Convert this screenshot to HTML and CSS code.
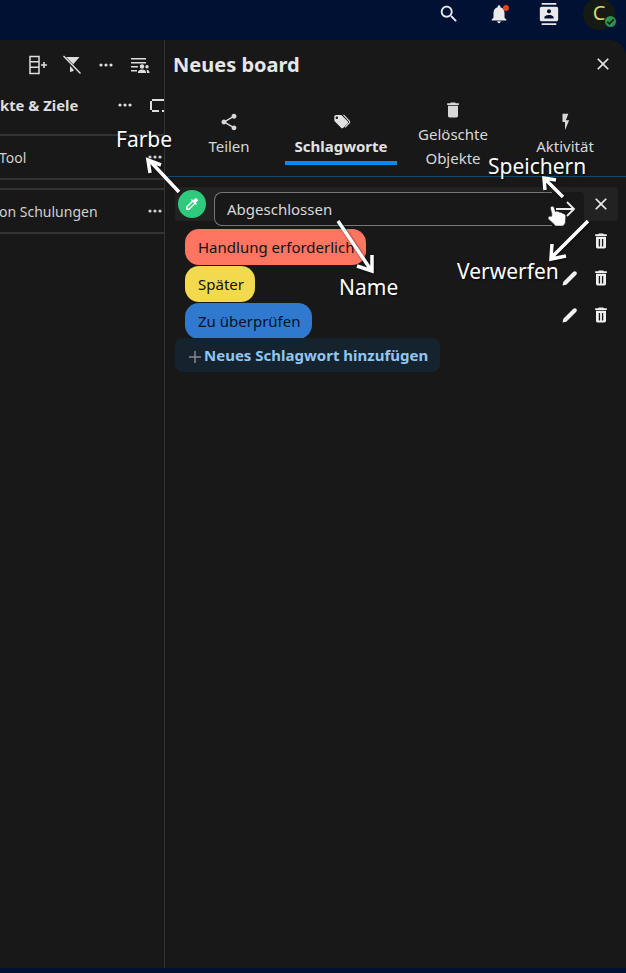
FILE: index.html
```html
<!DOCTYPE html>
<html lang="de">
<head>
<meta charset="utf-8">
<title>Neues board</title>
<link rel="stylesheet" href="styles.css">
</head>
<body>
<svg class="defs" width="0" height="0" aria-hidden="true">
  <symbol id="i-dots" viewBox="0 0 16 16"><circle cx="3" cy="8" r="1.6"/><circle cx="8" cy="8" r="1.6"/><circle cx="13" cy="8" r="1.6"/></symbol>
  <symbol id="i-trash" viewBox="0 0 24 24"><path fill-rule="evenodd" d="M6 19c0 1.100.9 2 2 2h8c1.100 0 2-.9 2-2V7H6v12zM9.300 9.500h1.600v9H9.300zM13.100 9.500h1.600v9h-1.600zM19 4h-3.500l-1-1h-5l-1 1H5v2h14V4z"/></symbol>
  <symbol id="i-edit" viewBox="0 0 24 24"><path d="M3 21l1-4.500L16 4.500c1-1 2.500-1 3.500 0s1 2.500 0 3.500L7.500 20z"/></symbol>
  <symbol id="i-close" viewBox="0 0 24 24"><path d="M19 6.410L17.590 5 12 10.590 6.410 5 5 6.410 10.590 12 5 17.590 6.410 19 12 13.410 17.590 19 19 17.590 13.410 12z"/></symbol>
</svg>

<header class="topbar">
  <svg class="ico ico-22" viewBox="0 0 24 24"><path d="M15.500 14h-.79l-.28-.27C15.410 12.590 16 11.110 16 9.500 16 5.910 13.090 3 9.500 3S3 5.910 3 9.500 5.910 16 9.500 16c1.610 0 3.090-.59 4.230-1.570l.27.28v.79l5 4.990L20.490 19l-4.990-5zm-6 0C7.010 14 5 11.990 5 9.500S7.010 5 9.500 5 14 7.010 14 9.500 11.990 14 9.500 14z"/></svg>
  <span class="bell">
    <svg class="ico ico-22" viewBox="0 0 24 24"><path d="M12 22c1.100 0 2-.9 2-2h-4c0 1.100.9 2 2 2zm6-6v-5c0-3.070-1.630-5.640-4.500-6.320V4c0-.83-.67-1.500-1.500-1.500s-1.500.67-1.500 1.500v.68C7.640 5.360 6 7.920 6 11v5l-2 2v1h16v-1l-2-2z"/></svg>
    <i class="bell-dot"></i>
  </span>
  <svg class="ico ico-22" viewBox="0 0 24 24"><path d="M20 0H4v2h16V0zM4 24h16v-2H4v2zM20 4H4c-1.100 0-2 .9-2 2v12c0 1.100.9 2 2 2h16c1.100 0 2-.9 2-2V6c0-1.100-.9-2-2-2zm-8 2.750c1.240 0 2.250 1.010 2.250 2.250s-1.010 2.250-2.250 2.250S9.750 10.240 9.750 9 10.760 6.750 12 6.750zM17 17H7v-1.500c0-1.670 3.330-2.500 5-2.500s5 .83 5 2.500V17z"/></svg>
  <span class="avatar">C<i class="avatar-badge"><svg viewBox="0 0 24 24"><path d="M5 12.500l4.500 4.500L19 7.500" fill="none" stroke="#1b1b1b" stroke-width="3.500"/></svg></i></span>
</header>

<main class="workspace">
  <section class="board">
    <div class="board-tools">
      <svg class="ico ico-20" viewBox="0 0 20 20"><path d="M2 1.500h9v17H2zM2 6.800h9M2 12.200h9" fill="none" stroke="currentColor" stroke-width="1.500"/><path d="M13 10h6M16 7v6" fill="none" stroke="currentColor" stroke-width="1.600"/></svg>
      <svg class="ico ico-20" viewBox="0 0 20 20"><path d="M1.500 2h16l-6 7v7l-3.500 1V9z"/><path d="M1 1.500l17 17" fill="none" stroke="#181818" stroke-width="3.500"/><path d="M1.500 1l17 17.500" fill="none" stroke="currentColor" stroke-width="1.400"/></svg>
      <svg class="ico ico-16"><use href="#i-dots"/></svg>
      <svg class="ico ico-20" viewBox="0 0 20 20"><path d="M1 3h15v1.500H1zM1 7h15v1.500H1zM1 11h7v1.500H1zM1 15h6v1.500H1z"/><circle cx="12" cy="11.500" r="2.200"/><path d="M7.800 18c0-2.300 2-3.400 4.200-3.400s4.200 1.100 4.200 3.400z"/><circle cx="17" cy="11.800" r="1.700"/><path d="M17 18h2.500c0-2-1-3-3-3.200 .4 1 .5 2 .5 3.200z"/></svg>
    </div>
    <div class="board-head">
      <span class="clip-title">kte &amp; Ziele</span>
      <span class="row-actions">
        <svg class="ico ico-16"><use href="#i-dots"/></svg>
        <svg class="ico ico-square" viewBox="0 0 20 20"><path d="M5 4h12v2H5zM3 6h2v9H3zM5 15h7v2H5zM15 15h2v2h-2z"/></svg>
      </span>
    </div>
    <div class="task">
      <span class="task-name">Tool</span>
      <svg class="ico ico-16"><use href="#i-dots"/></svg>
    </div>
    <div class="task task-next">
      <span class="task-name">on Schulungen</span>
      <svg class="ico ico-16"><use href="#i-dots"/></svg>
    </div>
  </section>

  <aside class="drawer">
    <div class="drawer-head">
      <h1>Neues board</h1>
      <svg class="ico ico-20"><use href="#i-close"/></svg>
    </div>
    <nav class="tabs">
      <div class="tab">
        <svg class="ico ico-20" viewBox="0 0 24 24"><path d="M18 16.080c-.76 0-1.440.3-1.960.77L8.910 12.700c.05-.23.09-.46.09-.7s-.04-.47-.09-.7l7.050-4.110c.54.5 1.250.81 2.040.81 1.660 0 3-1.340 3-3s-1.340-3-3-3-3 1.340-3 3c0 .24.04.47.09.7L8.040 9.810C7.500 9.310 6.790 9 6 9c-1.660 0-3 1.340-3 3s1.340 3 3 3c.79 0 1.500-.31 2.040-.81l7.120 4.160c-.05.21-.08.43-.08.65 0 1.610 1.310 2.920 2.920 2.920 1.610 0 2.920-1.310 2.920-2.920s-1.310-2.920-2.920-2.920z"/></svg>
        <span>Teilen</span>
      </div>
      <div class="tab tab-active">
        <svg class="ico ico-20" viewBox="0 0 24 24"><path d="M12.400 3.500l7.800 7.800c.6.600.6 1.500 0 2.100l-5.700 5.700c-.6.600-1.500.6-2.100 0l-7.800-7.800C4.200 11 4 10.500 4 10V5.500C4 4.400 4.900 3.500 6 3.500h4.600c.7 0 1.300 0 1.800 0zM7 8.500a1.500 1.500 0 1 0 0-3 1.500 1.500 0 0 0 0 3z" fill-rule="evenodd"/><path d="M15 3.500l7 7.500c.6.700.6 1.300 0 2l-5.200 5.500" fill="none" stroke="currentColor" stroke-width="1.300"/></svg>
        <span>Schlagworte</span>
      </div>
      <div class="tab">
        <svg class="ico ico-20" viewBox="0 0 24 24"><path d="M6 19c0 1.100.9 2 2 2h8c1.100 0 2-.9 2-2V7H6v12zM19 4h-3.500l-1-1h-5l-1 1H5v2h14V4z"/></svg>
        <span>Gelöschte Objekte</span>
      </div>
      <div class="tab">
        <svg class="ico ico-20" viewBox="0 0 24 24"><path d="M9 2v10h3v10l5-12h-4l3-8z"/></svg>
        <span>Aktivität</span>
      </div>
    </nav>

    <div class="editor">
      <span class="color-btn">
        <svg class="ico ico-16" viewBox="0 0 24 24"><path d="M20.710 5.630l-2.340-2.340c-.39-.39-1.020-.39-1.410 0l-3.120 3.120-1.930-1.910-1.410 1.410 1.420 1.420L3 16.250V21h4.750l8.920-8.920 1.420 1.420 1.410-1.410-1.920-1.920 3.120-3.120c.4-.4.4-1.030.01-1.420zM6.920 19L5 17.080l8.060-8.060 1.920 1.920L6.920 19z"/></svg>
      </span>
      <div class="name-box">
        <span class="name-field">Abgeschlossen</span>
        <svg class="ico save-ico" viewBox="0 0 20 16"><path d="M0 8h18M11 1l7 7-7 7" fill="none" stroke="currentColor" stroke-width="1.800"/></svg>
      </div>
      <span class="discard"><svg class="ico ico-20"><use href="#i-close"/></svg></span>
    </div>

    <ul class="labels">
      <li class="label-row">
        <span class="chip chip-red">Handlung erforderlich</span>
        <span class="label-actions"><svg class="ico ico-20"><use href="#i-trash"/></svg></span>
      </li>
      <li class="label-row">
        <span class="chip chip-yellow">Später</span>
        <span class="label-actions"><svg class="ico ico-20"><use href="#i-edit"/></svg><svg class="ico ico-20"><use href="#i-trash"/></svg></span>
      </li>
      <li class="label-row">
        <span class="chip chip-blue">Zu überprüfen</span>
        <span class="label-actions"><svg class="ico ico-20"><use href="#i-edit"/></svg><svg class="ico ico-20"><use href="#i-trash"/></svg></span>
      </li>
    </ul>
    <div class="add-label"><svg class="plus" viewBox="0 0 14 14"><path d="M7 1v12M1 7h12" fill="none" stroke="currentColor" stroke-width="1.500"/></svg>Neues Schlagwort hinzufügen</div>
  </aside>
</main>

<svg class="overlay" viewBox="0 0 626 973" aria-hidden="true">
  <g class="arrow-shadow">
    <path d="M179 192L150 161M150 173L148 160L161 165"/>
    <path d="M338 221L371 270M372 255L372 271L357 266"/>
    <path d="M563 197L545 179M545 190L544 178L556 180"/>
    <path d="M588 221L551 258M552 244L551 259L566 256"/>
  </g>
  <path class="hand" d="M552 215l-1.500-6.500c-.5-2.500 3-3 3.700-.8l1.300 4.300 .6-1 2.500.4 .7 .8 2.300 .2 .9 1 2.300 .6 1 2-.5 7-2 3h-8l-1.500-2-5-4.500c-1.800-1.800 .3-4.300 2.500-3z"/>
</svg>
<span class="note note-farbe">Farbe</span>
<span class="note note-speichern">Speichern</span>
<span class="note note-name">Name</span>
<span class="note note-verwerfen">Verwerfen</span>
</body>
</html>
```

FILE: styles.css
```css
* { box-sizing: border-box; }
html, body { margin: 0; padding: 0; }
body {
  position: relative;
  width: 626px;
  height: 973px;
  overflow: hidden;
  display: flex;
  flex-direction: column;
  background: #001133;
  color: #e4e4e4;
  font-family: "Noto Sans", sans-serif;
  font-size: 15px;
}
.defs { position: absolute; }
.ico { display: block; fill: currentColor; flex: none; }
.ico-22 { width: 22px; height: 22px; }
.ico-20 { width: 20px; height: 20px; }
.ico-16 { width: 16px; height: 16px; }

.topbar {
  height: 40px;
  flex: none;
  display: flex;
  align-items: center;
  justify-content: flex-end;
  gap: 28px;
  padding: 0 11px 12px 0;
  color: #e9e9e9;
}
.bell { position: relative; display: block; }
.bell-dot {
  position: absolute;
  top: 2px;
  right: 1px;
  width: 6px;
  height: 6px;
  border-radius: 50%;
  background: #e8431f;
}
.avatar {
  position: relative;
  width: 32px;
  height: 32px;
  margin-left: -5px;
  border-radius: 50%;
  background: #151b14;
  color: #d6d96a;
  font-size: 20px;
  line-height: 30px;
  text-align: center;
}
.avatar-badge {
  position: absolute;
  right: -1px;
  bottom: 3px;
  width: 11px;
  height: 11px;
  border-radius: 50%;
  background: #2d9152;
  display: flex;
}
.avatar-badge svg { width: 11px; height: 11px; }

.workspace {
  flex: 1;
  display: flex;
  margin-bottom: 5px;
  background: #181818;
  border-top-right-radius: 16px;
  overflow: hidden;
  min-height: 0;
}
.board {
  width: 165px;
  flex: none;
  border-right: 1px solid #333;
  overflow: hidden;
  font-size: 14px;
}
.board-tools {
  height: 50px;
  display: flex;
  align-items: center;
  padding-left: 28px;
  gap: 14px;
  color: #ddd;
}
.board-tools .ico-16 { margin: 0 2px; }
.board-head {
  height: 46px;
  display: flex;
  align-items: center;
  justify-content: space-between;
  border-bottom: 2px solid #333;
  font-weight: 700;
  font-size: 14.800px;
  color: #dedede;
  padding-bottom: 15px;
}
.row-actions { display: flex; align-items: center; gap: 14px; margin-right: -3px; }
.ico-square { width: 20px; height: 20px; color: #ddd; }
.task {
  height: 44px;
  display: flex;
  align-items: center;
  justify-content: space-between;
  border-bottom: 2px solid #333;
  padding-right: 1px;
  color: #d0d0d0;
}
.task-name { margin-left: -1px; }
.task-next { border-top: 2px solid #333; margin-top: 8px; height: 46px; }

.drawer { flex: 1; min-width: 0; }
.drawer-head {
  height: 50px;
  display: flex;
  align-items: center;
  justify-content: space-between;
  padding: 0 13px 2px 8px;
}
.drawer-head h1 { margin: 0; font-size: 20px; font-weight: 700; color: #e6e6e6; }
.tabs {
  height: 87px;
  display: flex;
  padding: 2px 0 0 8px;
  border-bottom: 1px solid #124a6e;
}
.tab {
  position: relative;
  width: 112px;
  display: flex;
  flex-direction: column;
  align-items: center;
  justify-content: center;
  text-align: center;
  line-height: 24px;
  color: #d8d8d8;
}
.tab .ico { margin: 2px 0; }
.tab-active { font-weight: 700; color: #e2e2e2; }
.tab-active::after {
  content: "";
  position: absolute;
  left: 0;
  right: 0;
  bottom: 11px;
  height: 4px;
  background: #0a8beb;
}

.editor {
  position: relative;
  height: 34px;
  margin: 10px 8px 0 10px;
  padding-left: 3px;
  display: flex;
  align-items: flex-start;
  background: #222;
  border-radius: 4px;
}
.color-btn {
  width: 28px;
  height: 28px;
  margin-top: 3px;
  flex: none;
  display: flex;
  align-items: center;
  justify-content: center;
  border-radius: 50%;
  background: #2fcb7c;
  color: #fff;
}
.name-box {
  width: 370px;
  height: 34px;
  margin: 5px 0 0 8px;
  flex: none;
  display: flex;
  align-items: center;
  background: #181818;
  border-radius: 8px 4px 0 0;
}
.name-field {
  flex: 1;
  height: 34px;
  padding-left: 12px;
  border: 1px solid #777;
  border-right: 0;
  border-radius: 8px 0 0 8px;
  line-height: 32px;
  color: #d8d8d8;
}
.save-ico { width: 20px; height: 16px; margin: 0 8px 0 4px; color: #eee; }
.discard {
  flex: 1;
  height: 34px;
  display: flex;
  align-items: center;
  justify-content: center;
  color: #eee;
}

.labels { list-style: none; margin: 8px 8px 0 20px; padding: 0; display: flex; flex-direction: column; gap: 1px; }
.label-row { display: flex; align-items: center; justify-content: space-between; height: 36px; }
.chip {
  height: 36px;
  padding: 0 12px 0 13px;
  border-radius: 14px;
  line-height: 36px;
  color: #111;
}
.chip-red { background: #fe7562; }
.chip-yellow { background: #f3d94d; padding-right: 11px; }
.chip-blue { background: #2f79cf; color: #04122c; }
.label-actions { display: flex; gap: 11px; color: #f0f0f0; padding: 0 7px 12px 0; }
.label-actions .ico { width: 20px; height: 20px; }

.add-label {
  position: relative;
  width: 265px;
  height: 34px;
  margin: -1px 0 0 10px;
  padding-left: 13px;
  display: flex;
  align-items: center;
  background: #15232f;
  border-radius: 8px;
  color: #8fc6f3;
  font-weight: 700;
}
.plus { width: 14px; height: 14px; margin: 4px 2px 0 0; color: #888; flex: none; }

.overlay { position: absolute; left: 0; top: 0; width: 626px; height: 973px; pointer-events: none; }
.arrow-shadow path { fill: none; stroke: #fff; stroke-width: 3.500; stroke-linejoin: miter; }
.arrow-shadow { filter: drop-shadow(1px 1px 1px rgba(0, 0, 0, .6)); }
.hand { fill: #fff; stroke: #222; stroke-width: .6; }
.note {
  position: absolute;
  color: #fff;
  font-size: 21px;
  line-height: 26px;
  white-space: nowrap;
  text-shadow: 1px 1px 2px rgba(0, 0, 0, .8);
}
.note-farbe { left: 116px; top: 126px; }
.note-speichern { left: 488px; top: 153px; }
.note-name { left: 339px; top: 274px; }
.note-verwerfen { left: 457px; top: 258px; }
```
